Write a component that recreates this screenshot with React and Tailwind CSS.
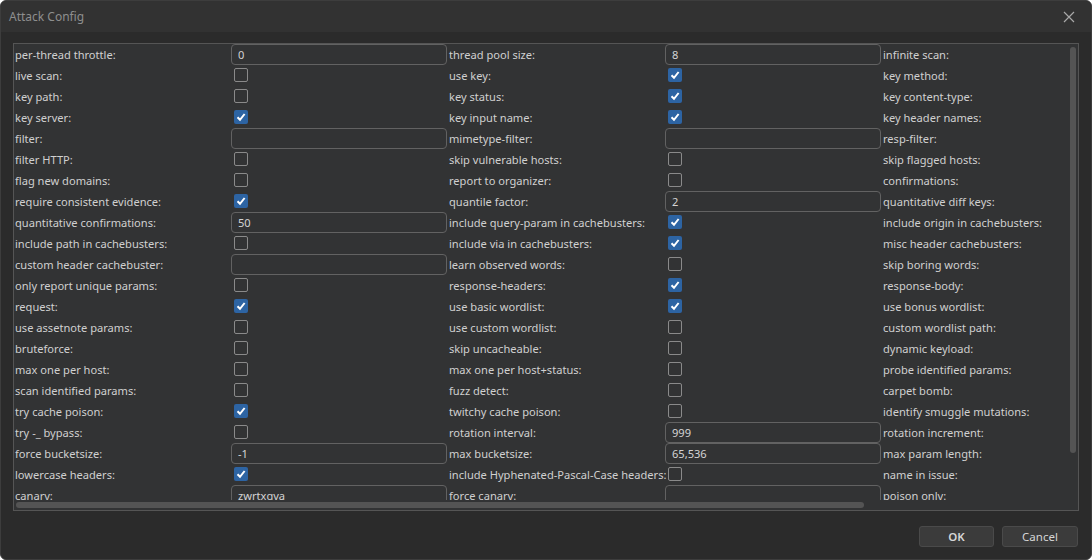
import React from 'react'

const rows = [
    [['per-thread throttle:', 't', '0'], ['thread pool size:', 't', '8'], ['infinite scan:', 'c', false]],
    [['live scan:', 'c', false], ['use key:', 'c', true], ['key method:', 'c', false]],
    [['key path:', 'c', false], ['key status:', 'c', true], ['key content-type:', 'c', false]],
    [['key server:', 'c', true], ['key input name:', 'c', true], ['key header names:', 'c', false]],
    [['filter:', 't', ''], ['mimetype-filter:', 't', ''], ['resp-filter:', 't', '']],
    [['filter HTTP:', 'c', false], ['skip vulnerable hosts:', 'c', false], ['skip flagged hosts:', 'c', false]],
    [['flag new domains:', 'c', false], ['report to organizer:', 'c', false], ['confirmations:', 't', '']],
    [['require consistent evidence:', 'c', true], ['quantile factor:', 't', '2'], ['quantitative diff keys:', 'c', false]],
    [['quantitative confirmations:', 't', '50'], ['include query-param in cachebusters:', 'c', true], ['include origin in cachebusters:', 'c', false]],
    [['include path in cachebusters:', 'c', false], ['include via in cachebusters:', 'c', true], ['misc header cachebusters:', 'c', false]],
    [['custom header cachebuster:', 't', ''], ['learn observed words:', 'c', false], ['skip boring words:', 'c', false]],
    [['only report unique params:', 'c', false], ['response-headers:', 'c', true], ['response-body:', 'c', false]],
    [['request:', 'c', true], ['use basic wordlist:', 'c', true], ['use bonus wordlist:', 'c', false]],
    [['use assetnote params:', 'c', false], ['use custom wordlist:', 'c', false], ['custom wordlist path:', 't', '']],
    [['bruteforce:', 'c', false], ['skip uncacheable:', 'c', false], ['dynamic keyload:', 'c', false]],
    [['max one per host:', 'c', false], ['max one per host+status:', 'c', false], ['probe identified params:', 'c', false]],
    [['scan identified params:', 'c', false], ['fuzz detect:', 'c', false], ['carpet bomb:', 'c', false]],
    [['try cache poison:', 'c', true], ['twitchy cache poison:', 'c', false], ['identify smuggle mutations:', 'c', false]],
    [['try -_ bypass:', 'c', false], ['rotation interval:', 't', '999'], ['rotation increment:', 't', '']],
    [['force bucketsize:', 't', '-1'], ['max bucketsize:', 't', '65,536'], ['max param length:', 't', '']],
    [['lowercase headers:', 'c', true], ['include Hyphenated-Pascal-Case headers:', 'c', false], ['name in issue:', 'c', false]],
    [['canary:', 't', 'zwrtxgva'], ['force canary:', 't', ''], ['poison only:', 'c', false]],
]

function Check({ on }) {
    if (on) {
        return (
            <div className="ml-[3px] w-[14px] h-[14px] rounded-[2px] bg-[#2d64a3] flex items-center justify-center">
                <svg width="10" height="10" viewBox="0 0 10 10">
                    <path d="M1.5 5.2 L4 7.8 L8.6 2" stroke="#fff" strokeWidth="2" fill="none" />
                </svg>
            </div>
        )
    }
    return <div className="ml-[3px] w-[14px] h-[14px] rounded-[2px] border border-[#8a8a8a]" />
}

function Field({ value }) {
    return (
        <div className="w-[216px] h-[21px] rounded-[4px] border border-[#626262] flex items-center pl-[6px] pt-[1px] text-[#d4d4d4]">
            {value}
        </div>
    )
}

function Cell({ cell }) {
    const [label, kind, value] = cell
    return (
        <div className="flex items-center shrink-0 w-[434px]">
            <div className="w-[217px] shrink-0 pl-[1px] pt-[2px] whitespace-nowrap">{label}</div>
            <div className="w-[217px] shrink-0 flex items-center">
                {kind === 't' ? <Field value={value} /> : <Check on={value} />}
            </div>
        </div>
    )
}

export default function App() {
    return (
        <div
            className="w-[1092px] h-[560px] bg-[#2b2b2b] flex flex-col text-[11.1px] text-[#d0d0d0] border border-[#3d3d3d] rounded-[6px] overflow-hidden"
            style={{ fontFamily: '"Noto Sans", "Open Sans", sans-serif' }}>
            <div className="h-[31px] shrink-0 bg-[#323232] flex items-center justify-between pl-[8px] pr-[16px]">
                <span className="text-[12px] text-[#8e8e8e]">Attack Config</span>
                <svg width="12" height="12" viewBox="0 0 12 12">
                    <path d="M1 1 L11 11 M11 1 L1 11" stroke="#a8a8a8" strokeWidth="1.2" />
                </svg>
            </div>
            <div className="pl-[12px] pr-[12px] pt-[11px]">
                <div className="h-[468px] border border-[#555] bg-[#323334] flex">
                    <div className="flex-1 flex flex-col min-w-0">
                        <div className="h-[456px] overflow-hidden">
                            {rows.map((r, i) => (
                                <div key={i} className="h-[21px] flex items-center">
                                    {r.map((c, j) => (
                                        <Cell key={j} cell={c} />
                                    ))}
                                </div>
                            ))}
                        </div>
                        <div className="h-[10px] flex items-center pl-[2px]">
                            <div className="w-[848px] h-[6px] rounded-full bg-[#545454]" />
                        </div>
                    </div>
                    <div className="w-[10px] shrink-0 pt-[3px] flex justify-center">
                        <div className="w-[6px] h-[406px] rounded-full bg-[#545454]" />
                    </div>
                </div>
            </div>
            <div className="flex justify-end gap-[8px] pr-[13px] pt-[15px]">
                <button className="w-[75px] h-[21px] rounded-[3px] bg-[#3b3b3b] border border-[#4a4a4a] text-[#d6d6d6] font-semibold text-[11.5px]">
                    OK
                </button>
                <button className="w-[76px] h-[21px] rounded-[3px] bg-[#3b3b3b] border border-[#4a4a4a] text-[#d6d6d6] text-[11.5px]">
                    Cancel
                </button>
            </div>
        </div>
    )
}
